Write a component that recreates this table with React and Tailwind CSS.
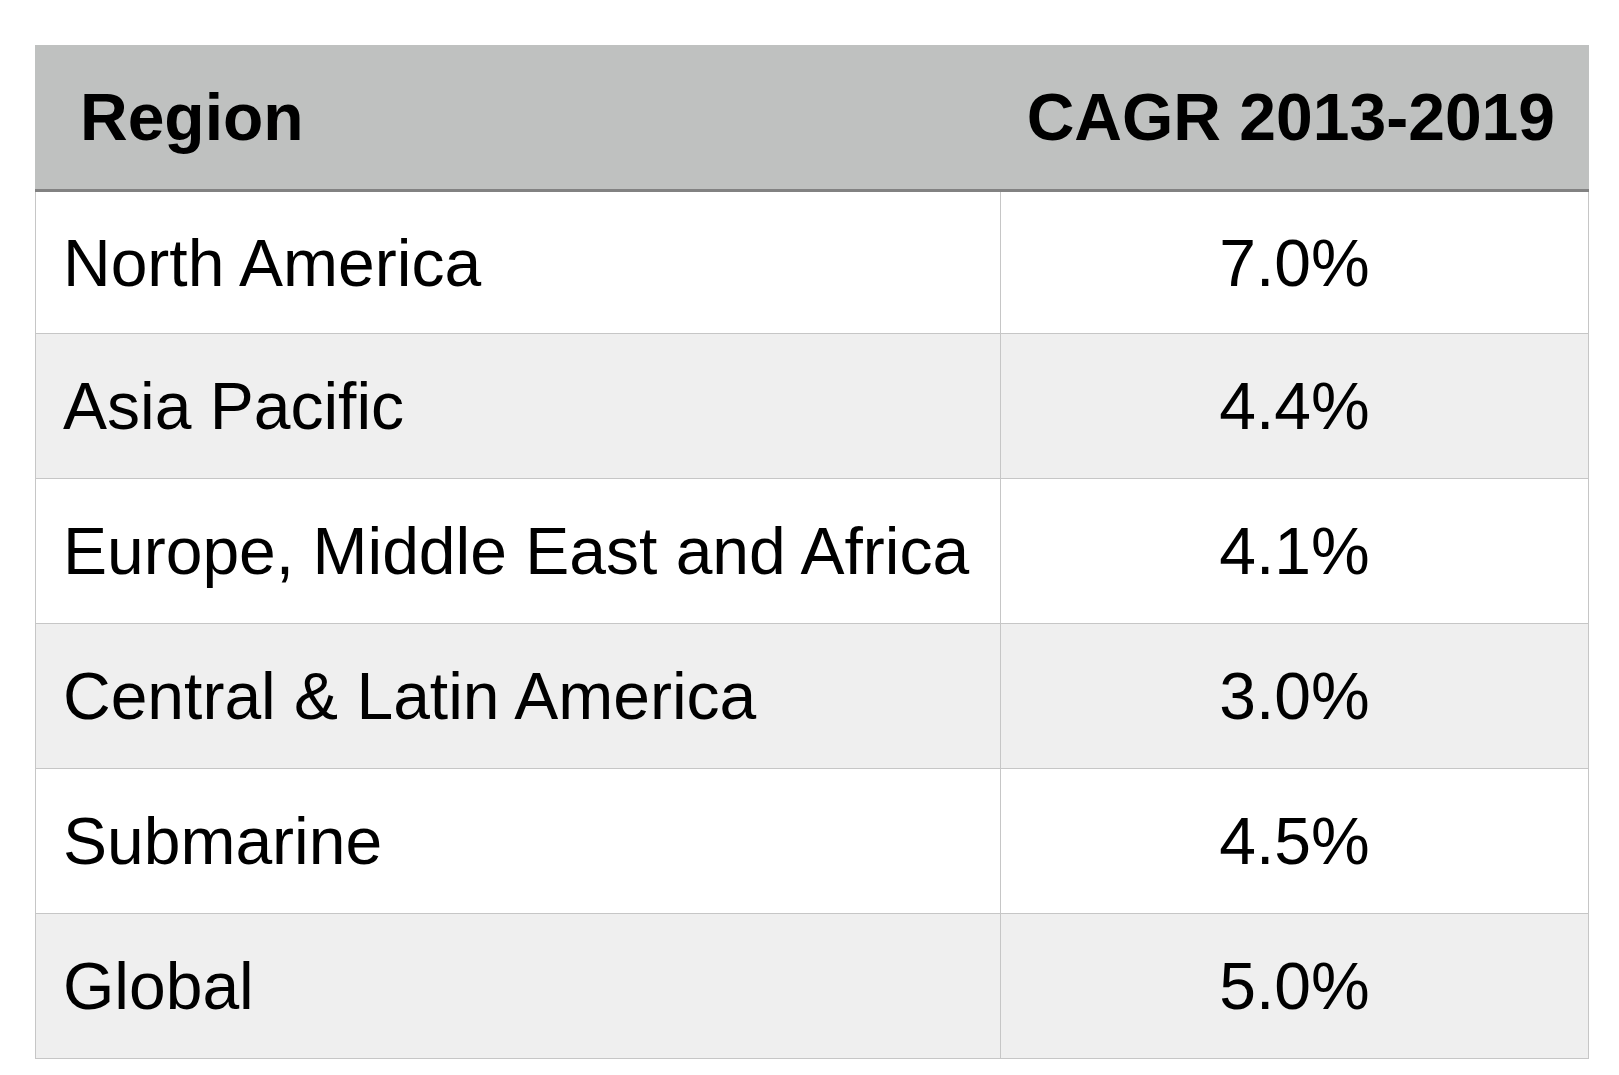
const rows = [
  { region: 'North America', cagr: '7.0%' },
  { region: 'Asia Pacific', cagr: '4.4%' },
  { region: 'Europe, Middle East and Africa', cagr: '4.1%' },
  { region: 'Central & Latin America', cagr: '3.0%' },
  { region: 'Submarine', cagr: '4.5%' },
  { region: 'Global', cagr: '5.0%' },
]

function App() {
  return (
    <div className="min-h-screen bg-white pt-[45px] pl-[35px] font-['Liberation_Sans',Arial,sans-serif] text-black">
      <div className="w-[1554px]">
        {/* Header */}
        <div className="grid h-[147px] grid-cols-[965px_1fr] border-b-[3px] border-[#828282] bg-[#bfc1c0] text-[66px] font-bold leading-none">
          <div className="flex items-center pl-[45px]">Region</div>
          <div className="flex items-center justify-end pr-[34px]">CAGR 2013-2019</div>
        </div>

        {/* Rows */}
        {rows.map((row, i) => (
          <div
            key={row.region}
            className={`grid grid-cols-[965px_1fr] border-x border-b border-[#c6c6c6] text-[66px] leading-none ${
              i === 0 ? 'h-[142px]' : 'h-[145px]'
            } ${i % 2 === 1 ? 'bg-[#efefef]' : 'bg-white'}`}
          >
            <div className="flex items-center border-r border-[#c6c6c6] pl-[27px]">{row.region}</div>
            <div className="flex items-center justify-center">{row.cagr}</div>
          </div>
        ))}
      </div>
    </div>
  )
}

export default App
